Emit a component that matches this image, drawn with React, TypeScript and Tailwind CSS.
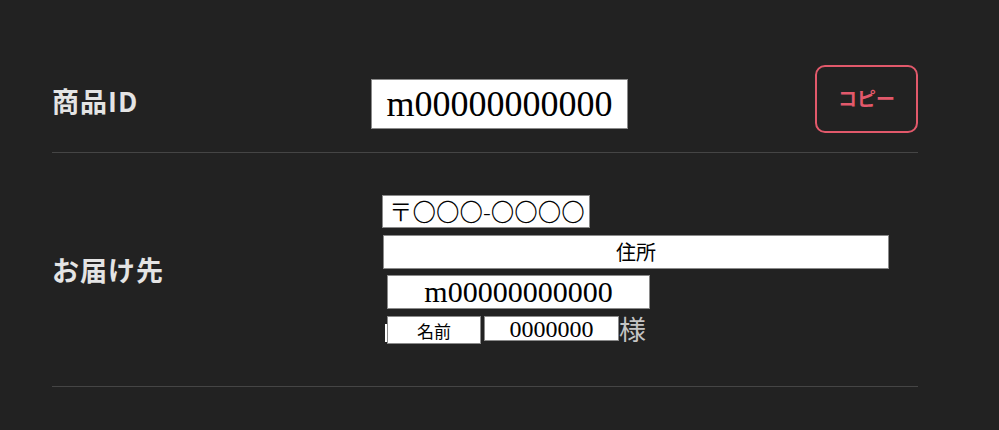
import React from "react";

const sans = "font-['Noto_Sans_CJK_JP','Noto_Sans',sans-serif]";
const serif = "font-['Liberation_Serif','Noto_Sans_CJK_JP',serif]";

const Row = ({ label, children, className }: { label: string; children: React.ReactNode; className?: string }) => (
  <div className={`flex items-center border-b border-[#454545] ${className ?? ""}`}>
    <div className={`w-[330px] shrink-0 text-[27px] leading-none font-bold tracking-[1px] text-[#e4e4e4] ${sans}`}>{label}</div>
    <div className="flex-1 flex items-center">{children}</div>
  </div>
);

const App = () => {
  return (
    <div className="w-full h-[430px] bg-[#222222] pt-[48px]">
      <div className="ml-[52px] w-[866px]">
        {/* item id */}
        <Row label="商品ID" className="h-[105px]">
          <div className="flex-1 flex">
            <div
              className={`-ml-[11px] mt-[8px] w-[257px] h-[50px] bg-white border border-[#8a8a8a] flex items-center justify-center text-[36px] leading-none text-black ${serif}`}
            >
              m00000000000
            </div>
          </div>
          <button
            className={`w-[103px] h-[68px] -mt-[3px] rounded-[10px] border-2 border-[#e2596b] text-[#e2596b] text-[19px] font-semibold ${sans}`}
          >
            コピー
          </button>
        </Row>

        {/* shipping address */}
        <Row label="お届け先" className="h-[234px]">
          <div className="flex flex-col">
            <div
              className={`w-[208px] h-[33px] bg-white border border-[#8a8a8a] flex items-center pl-[6px] text-[23.5px] leading-none font-light text-black ${sans}`}
            >
              〒〇〇〇-〇〇〇〇
            </div>
            <div
              className={`ml-[1px] mt-[7px] w-[506px] h-[34px] bg-white border border-[#8a8a8a] flex items-center justify-center text-[20px] leading-none text-black ${sans}`}
            >
              住所
            </div>
            <div
              className={`ml-[5px] mt-[6px] w-[263px] h-[34px] bg-white border border-[#8a8a8a] flex items-center justify-center text-[30px] leading-none text-black ${serif}`}
            >
              m00000000000
            </div>
            <div className="ml-[3px] mt-[7px] flex items-start">
              <div className="mt-[8px] w-[2px] h-[18px] bg-white" />
              <div
                className={`w-[94px] h-[28px] bg-white border border-[#8a8a8a] flex items-center justify-center text-[17px] leading-none text-black ${sans}`}
              >
                名前
              </div>
              <div
                className={`ml-[3px] w-[135px] h-[25px] bg-white border border-[#8a8a8a] flex items-center justify-center text-[24px] leading-none text-black ${serif}`}
              >
                0000000
              </div>
              <span className={`-mt-[1px] text-[27px] leading-none text-[#c4c4c4] ${sans}`}>様</span>
            </div>
          </div>
        </Row>
      </div>
    </div>
  );
};

export default App;
